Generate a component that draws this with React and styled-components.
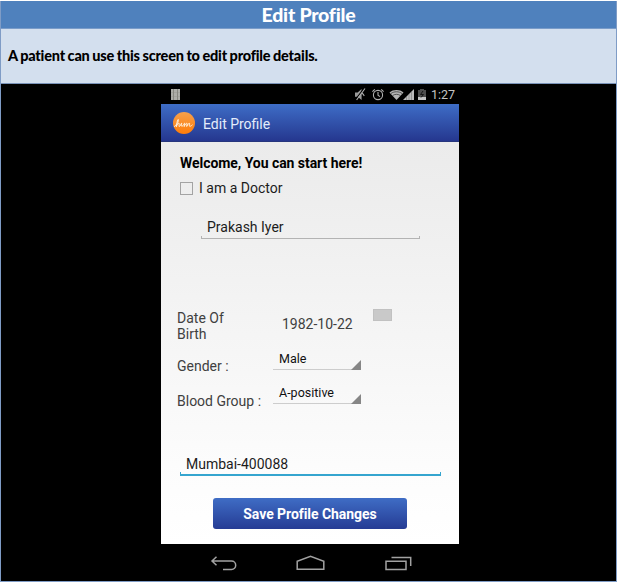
import React from 'react';
import styled, { createGlobalStyle } from 'styled-components';

const GlobalStyle = createGlobalStyle`
  * { box-sizing: border-box; }
  body { margin: 0; background: #fff; }
`;

const Sheet = styled.div`
  width: 617px;
  height: 581px;
  margin-top: 1px;
  border: 1px solid #7f9cc6;
  border-top: 0;
  background: #000;
  display: flex;
  flex-direction: column;
`;

const Heading = styled.h1`
  margin: 0;
  height: 28px;
  background: #4f81bd;
  border-bottom: 1px solid #7a9cc9;
  color: #fff;
  font: 900 19.5px/28px Lato, sans-serif;
  letter-spacing: -0.25px;
  text-align: center;
`;

const Summary = styled.p`
  margin: 0;
  height: 55px;
  padding: 0 7px;
  background: #d3dfee;
  border-bottom: 1px solid #7a93b8;
  color: #000;
  font: 900 14.5px/53px Lato, sans-serif;
  letter-spacing: -0.2px;
  word-spacing: -0.6px;
  white-space: nowrap;
`;

const Phone = styled.div`
  width: 298px;
  margin-left: 160px;
  flex: 1;
  display: flex;
  flex-direction: column;
  font-family: Roboto, sans-serif;
`;

const StatusBar = styled.div`
  height: 20px;
  padding: 1px 4px 0 9px;
  display: flex;
  justify-content: space-between;
`;

const StatusIcons = styled.svg`
  display: block;
  margin-left: auto;
`;

const Clock = styled.span`
  width: 24px;
  margin-left: 3px;
  color: #c4c4c4;
  font-size: 12.5px;
  line-height: 20px;
  white-space: nowrap;
`;

const ActionBar = styled.header`
  height: 38px;
  padding-left: 11px;
  display: flex;
  align-items: center;
  gap: 7px;
  background: linear-gradient(#3e6dc6, #25378f);
  border-bottom: 1px solid #26367d;
  color: #e4ecfb;
  font-size: 14px;
`;

const Title = styled.span`
  padding-top: 2px;
`;

const Form = styled.main`
  height: 402px;
  padding-top: 13px;
  background: linear-gradient(#ebebeb, #f0f0f0 25%, #fcfcfc 80%, #fff);
  font-size: 14px;
  line-height: 16px;
  color: #1c1c1c;
`;

const Welcome = styled.h2`
  margin: 0 0 9px 19px;
  font-size: 14px;
  line-height: 16px;
  font-weight: 700;
  letter-spacing: -0.05px;
  color: #000;
  white-space: nowrap;
`;

const CheckRow = styled.label`
  display: flex;
  align-items: center;
  gap: 6px;
  height: 16px;
  margin-left: 19px;
`;

const Checkbox = styled.span`
  width: 13px;
  height: 13px;
  border: 1px solid #a3a3a3;
`;

const TextField = styled.div`
  width: ${(p) => p.$width}px;
  height: 20px;
  margin: ${(p) => p.$top}px 0 0 ${(p) => p.$left}px;
  padding-left: 6px;
  border-bottom: ${(p) => (p.$active ? 2 : 1)}px solid ${(p) => (p.$active ? '#35a5cf' : '#b3b3b3')};
  background:
    linear-gradient(${(p) => (p.$active ? '#35a5cf, #35a5cf' : '#b3b3b3, #b3b3b3')}) left bottom / 1px 2px no-repeat,
    linear-gradient(${(p) => (p.$active ? '#35a5cf, #35a5cf' : '#b3b3b3, #b3b3b3')}) right bottom / 1px 2px no-repeat;
`;

const BirthRow = styled.div`
  display: flex;
  height: 34px;
  margin-top: 70px;
  padding-left: 16px;
  color: #404040;
`;

const BirthLabel = styled.span`
  width: 60px;
  padding-top: 1px;
`;

const BirthDate = styled.span`
  width: 91px;
  margin-left: 45px;
  padding-top: 7px;
`;

const DateButton = styled.span`
  width: 19px;
  height: 12px;
  background: #c9c9c9;
  border: 1px solid #c1c1c1;
`;

const SelectRow = styled.div`
  display: flex;
  height: 18px;
  margin-top: ${(p) => p.$top}px;
  padding-left: 16px;
  color: #404040;
`;

const SelectLabel = styled.span`
  width: 96px;
  padding-top: ${(p) => p.$drop}px;
  white-space: nowrap;
`;

const Select = styled.div`
  display: flex;
  justify-content: space-between;
  align-items: flex-end;
  width: 88px;
  height: 19px;
  padding-left: 6px;
  border-bottom: 1px solid #cdcdcd;
  color: #111;
  font-size: 12.5px;
  line-height: 18px;
`;

const Caret = styled.span`
  width: 10px;
  height: 10px;
  margin-bottom: -1px;
  background: #868686;
  clip-path: polygon(100% 0, 100% 100%, 0 100%);
`;

const SelectText = styled.span`
  height: 18px;
  line-height: 16px;
`;

const SaveButton = styled.button`
  display: block;
  width: 194px;
  height: 31px;
  margin: 22px 0 0 52px;
  padding: 1px 0 0;
  border: 0;
  border-radius: 3px;
  background: linear-gradient(#3f6dc5, #253b94);
  color: #fff;
  font: 700 14px Roboto, sans-serif;
  letter-spacing: -0.05px;
`;

const NavBar = styled.nav`
  height: 37px;
`;

function Logo() {
  return (
    <svg width="24" height="24" viewBox="0 0 24 24" fill="none">
      <defs>
        <linearGradient id="orange" x1="0" y1="0" x2="0" y2="1">
          <stop stopColor="#f6a04c" />
          <stop offset="1" stopColor="#ff7d08" />
        </linearGradient>
      </defs>
      <circle cx="12" cy="12" r="11" fill="url(#orange)" />
      <path
        d="M2.3 15.5C4.5 14 7 10.5 6.3 8.5C5.4 8 4.8 13 4.3 15.8C5 13.4 6.5 11.7 7.1 12.3C7.5 13.2 6.6 15.6 7.3 15.6C8.4 15.4 9 12 9.8 12.1C9.2 14 9.2 15.5 10 15.3C11.2 15 12 12 12.6 12.1C13 13 12 14.6 12.2 15.6C13 13.3 14.4 12 15 12.3C15.3 13.2 14.7 14.6 14.7 15.5C15.6 13.2 17 12 17.6 12.4C18 13.3 16.6 15.2 17.7 15.3C18.8 15.3 19.5 14.6 20.2 14"
        stroke="#fff1df"
        strokeWidth="1"
        strokeLinecap="round"
        strokeLinejoin="round"
      />
    </svg>
  );
}

function KeyboardIcon() {
  return (
    <svg width="11" height="19" viewBox="0 0 11 19">
      <path d="M1 4h9v11H1z" fill="#adada8" />
      <path d="M3.5 4v11M7.5 4v11" stroke="#77776f" strokeWidth=".7" />
      <path d="M1 7.5h9M1 11.5h9" stroke="#8b8b84" strokeWidth=".3" />
    </svg>
  );
}

function IndicatorIcons() {
  return (
    <StatusIcons width="74" height="19" viewBox="0 0 74 19" fill="none">
      <path d="M1 7.5h2.6L7.6 4v11L3.6 11.8H1z" fill="#9a9a9a" />
      <path d="M10.2 3.2L1.8 14.2" stroke="#000" strokeWidth="1.1" />
      <path d="M11 3.5L2.6 15M8.3 8.2l2 2.6" stroke="#b0b0b0" strokeWidth="1.1" />
      <circle cx="24" cy="10" r="4.6" stroke="#b0b0b0" strokeWidth="1.1" />
      <path d="M24 7v3.2l2 1.4M18.4 6.6l2.4-2.2M29.6 6.6l-2.4-2.2" stroke="#b0b0b0" strokeWidth="1.1" />
      <path d="M35.5 7.5C39 4.2 46 4.2 49.5 7.5L42.5 15z" fill="#b4b4b4" />
      <path d="M37 8.5C40 6.2 45 6.2 48 8.5M38.7 10.5C41 8.9 44 8.9 46.3 10.5" stroke="#262626" strokeWidth=".7" />
      <path d="M60 4v11H49z" fill="#bcbcbc" />
      <path d="M52.5 11v4M55 9v6M57.5 7v8" stroke="#5b5b5b" strokeWidth=".4" />
      <path d="M64 5h2V4h4v1h2v10h-8z" fill="#4d4d4d" />
      <path d="M64 12h8v3h-8z" fill="#c5c5c5" />
      <path d="M69 6l-2.5 3.5h3L67 12.5" stroke="#151515" />
    </StatusIcons>
  );
}

function NavIcons() {
  return (
    <svg width="298" height="37" viewBox="0 0 298 37" fill="none" stroke="#a2a2a2" strokeWidth="1.5">
      <path d="M55.5 12.7L51 17l4.5 4.3M51.5 17H70.5a4.2 4.2 0 0 1 0 8.4H62" />
      <path d="M136.2 25.3V17.2L149.5 12.4l13.3 4.8v8.1z" />
      <path d="M225 17.3h20v8.2h-20zM230.5 13.5h19.2v8.5" />
    </svg>
  );
}

function SelectField({ label, value, top, drop }) {
  return (
    <SelectRow $top={top}>
      <SelectLabel $drop={drop}>{label}</SelectLabel>
      <Select>
        <SelectText>{value}</SelectText>
        <Caret />
      </Select>
    </SelectRow>
  );
}

export default function App() {
  return (
    <>
      <GlobalStyle />
      <Sheet>
        <Heading>Edit Profile</Heading>
        <Summary>A patient can use this screen to edit profile details.</Summary>
        <Phone>
          <StatusBar>
            <KeyboardIcon />
            <IndicatorIcons />
            <Clock>1:27</Clock>
          </StatusBar>
          <ActionBar>
            <Logo />
            <Title>Edit Profile</Title>
          </ActionBar>
          <Form>
            <Welcome>Welcome, You can start here!</Welcome>
            <CheckRow>
              <Checkbox />
              I am a Doctor
            </CheckRow>
            <TextField $width={219} $left={40} $top={23}>Prakash Iyer</TextField>
            <BirthRow>
              <BirthLabel>Date Of Birth</BirthLabel>
              <BirthDate>1982-10-22</BirthDate>
              <DateButton />
            </BirthRow>
            <SelectField label="Gender :" value="Male" top={8} drop={7} />
            <SelectField label="Blood Group :" value="A-positive" top={16} drop={8} />
            <TextField $active $width={261} $left={19} $top={53}>Mumbai-400088</TextField>
            <SaveButton type="button">Save Profile Changes</SaveButton>
          </Form>
          <NavBar>
            <NavIcons />
          </NavBar>
        </Phone>
      </Sheet>
    </>
  );
}
